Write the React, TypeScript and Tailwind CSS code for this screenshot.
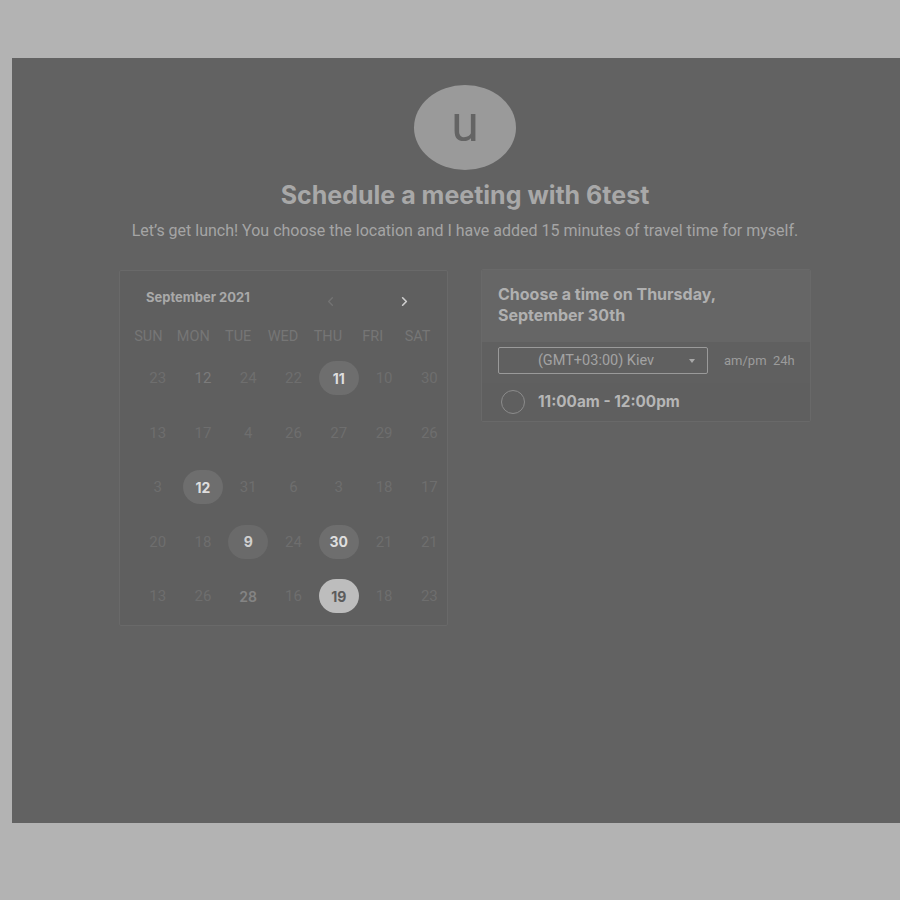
import { ChevronLeft, ChevronRight } from "lucide-react";

type Day = {
  n: number;
  tone?: "dim" | "mid" | "bright";
  mark?: "dark" | "hatch" | "light";
};

const dayNames = ["SUN", "MON", "TUE", "WED", "THU", "FRI", "SAT"];

// rows of the month grid, as shown
const weeks: Day[][] = [
  [{ n: 23 }, { n: 12, tone: "mid" }, { n: 24 }, { n: 22 }, { n: 11, mark: "dark" }, { n: 10 }, { n: 30 }],
  [{ n: 13 }, { n: 17 }, { n: 4 }, { n: 26 }, { n: 27 }, { n: 29 }, { n: 26 }],
  [{ n: 3 }, { n: 12, mark: "dark" }, { n: 31 }, { n: 6 }, { n: 3 }, { n: 18 }, { n: 17 }],
  [{ n: 20 }, { n: 18 }, { n: 9, mark: "hatch" }, { n: 24 }, { n: 30, mark: "dark" }, { n: 21 }, { n: 21 }],
  [{ n: 13 }, { n: 26 }, { n: 28, tone: "bright" }, { n: 16 }, { n: 19, mark: "light" }, { n: 18 }, { n: 23 }],
];

const DateCell = ({ day }: { day: Day }) => {
  if (day.mark) {
    const bg =
      day.mark === "light"
        ? "bg-[#bdbdbd] text-[#5c5c5c]"
        : day.mark === "hatch"
        ? "bg-[#6a6a6a] text-[#cfcfcf]"
        : "bg-[#6e6e6e] text-[#dedede]";
    return (
      <div className="flex items-center justify-center h-[54.5px]">
        <div
          className={`w-[40px] h-[34px] rounded-full flex items-center justify-center font-['Inter'] font-bold text-[14px] ${bg}`}>
          {day.n}
        </div>
      </div>
    );
  }
  const color =
    day.tone === "bright"
      ? "text-[#848484] font-['Inter'] font-semibold text-[14px]"
      : day.tone === "mid"
      ? "text-[#7b7b7b] font-['Roboto'] text-[15px]"
      : "text-[#6e6e6e] font-['Roboto'] text-[15px]";
  return (
    <div className={`flex items-center justify-center h-[54.5px] ${color}`}>
      {day.n}
    </div>
  );
};

const Calendar = () => {
  return (
    <div className="w-[329px] h-[356px] bg-[#5f5f5f] border border-[#696969] rounded-[2px] overflow-visible">
      <div className="flex items-center h-[54px] pl-[26px]">
        <span className="font-['Inter'] font-bold text-[13px] text-[#a9a9a9] w-[174px]">
          September 2021
        </span>
        <ChevronLeft size={15} strokeWidth={2.2} className="text-[#737373] mt-[6px] ml-[3px]" />
        <ChevronRight size={15} strokeWidth={2.6} className="text-[#cfcfcf] mt-[6px] ml-[59px]" />
      </div>
      <div className="grid grid-cols-7 w-[314px] ml-[6px] h-[24px] items-center">
        {dayNames.map(d => (
          <div key={d} className="text-center font-['Roboto'] text-[14.5px] text-[#767676]">
            {d}
          </div>
        ))}
      </div>
      <div className="grid grid-cols-7 w-[317px] ml-[15px] mt-[2px]">
        {weeks.map((w, i) =>
          w.map((d, j) => <DateCell key={`${i}-${j}`} day={d} />)
        )}
      </div>
    </div>
  );
};

const TimePanel = () => {
  return (
    <div className="w-[330px] border border-[#696969] rounded-[2px] bg-[#606060] overflow-hidden">
      <div className="h-[72px] bg-[#666666] pt-[14px] pl-[16px] font-['Inter'] font-bold text-[16px] leading-[21px] text-[#b0b0b0]">
        Choose a time on Thursday,
        <br />
        September 30th
      </div>
      <div className="flex items-center pl-[16px] pt-[5px]">
        <div className="relative w-[210px] h-[27px] border border-[#9a9a9a] rounded-[2px] flex items-center justify-center pr-[14px] font-['Roboto'] text-[14.5px] text-[#a3a3a3]">
          (GMT+03:00) Kiev
          <span className="absolute right-[12px] top-[11px] w-0 h-0 border-l-[3.5px] border-r-[3.5px] border-t-[4px] border-l-transparent border-r-transparent border-t-[#a8a8a8]" />
        </div>
        <span className="ml-[16px] font-['Roboto'] text-[13px] text-[#9c9c9c] whitespace-pre">
          am/pm  24h
        </span>
      </div>
      <div className="flex items-center h-[38px] mt-[9px] bg-[#5f5f5f] pl-[19px]">
        <div className="w-[24px] h-[24px] rounded-full border-[1.5px] border-[#8c8c8c]" />
        <span className="ml-[13px] font-['Inter'] font-bold text-[15.3px] text-[#b6b6b6]">
          11:00am - 12:00pm
        </span>
      </div>
    </div>
  );
};

export default function App() {
  return (
    <div className="w-[900px] h-[900px] overflow-hidden bg-[#b3b3b3] pt-[58px] pl-[12px]">
      <div className="w-[906px] h-[765px] bg-[#626262] flex flex-col items-center">
        <div className="mt-[27px] w-[102px] h-[85px] rounded-[50%] bg-[#9a9a9a] flex items-center justify-center font-['Roboto'] text-[50px] leading-none text-[#646464] pb-[8px]">
          u
        </div>
        <h1 className="mt-[10px] font-['Inter'] font-bold text-[25px] leading-[30px] text-[#a8a8a8]">
          Schedule a meeting with 6test
        </h1>
        <p className="mt-[10px] font-['Roboto'] text-[16px] leading-[22px] text-[#a5a5a5]">
          Let’s get lunch! You choose the location and I have added 15 minutes of travel time for myself.
        </p>
        <div className="flex items-start gap-[33px] mt-[28px]">
          <Calendar />
          <div className="-mt-[1px]">
            <TimePanel />
          </div>
        </div>
      </div>
    </div>
  );
}
